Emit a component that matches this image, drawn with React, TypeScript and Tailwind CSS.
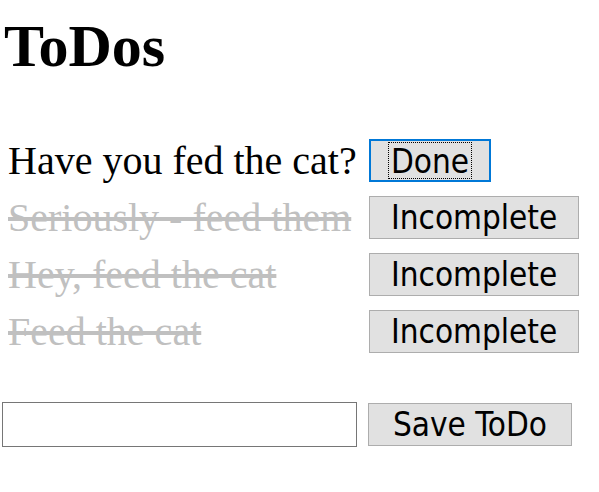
import { useState } from 'react';

type Todo = { id: number; text: string; done: boolean };

const initialTodos: Todo[] = [
  { id: 1, text: 'Have you fed the cat?', done: false },
  { id: 2, text: 'Seriously - feed them', done: true },
  { id: 3, text: 'Hey, feed the cat', done: true },
  { id: 4, text: 'Feed the cat', done: true },
];

const btn =
  'h-[43px] bg-[#e1e1e1] border border-[#adadad] text-black text-[33px] leading-none font-["DejaVu_Sans_Condensed","DejaVu_Sans",sans-serif] whitespace-nowrap';

function App() {
  const [todos] = useState(initialTodos);

  return (
    <div className="px-[2px] pt-[16px] text-black font-['Liberation_Serif','Times_New_Roman',serif]">
      <h1 className="ml-[2px] text-[60px] font-bold leading-none">ToDos</h1>

      <div className="mt-[63px] flex flex-col gap-[14px]">
        {todos.map((todo, i) => (
          <div key={todo.id} className="flex items-center">
            <span
              className={
                todo.done
                  ? 'w-[367px] pl-[6px] text-[40px] leading-none text-[#c0c0c0] line-through'
                  : 'w-[367px] pl-[6px] text-[40px] leading-none'
              }
            >
              {todo.text}
            </span>
            {i === 0 ? (
              <button className="h-[43px] px-[17px] bg-[#e1e1e1] border-2 border-[#0078d7] text-black text-[33px] leading-none font-['DejaVu_Sans_Condensed','DejaVu_Sans',sans-serif]">
                <span className="block h-[37px] px-[2px] leading-[37px] border border-dotted border-black">
                  Done
                </span>
              </button>
            ) : (
              <button className={btn + ' px-[21px]'}>Incomplete</button>
            )}
          </div>
        ))}
      </div>

      <form className="mt-[49px] flex items-center gap-[11px]" onSubmit={(e) => e.preventDefault()}>
        <input type="text" className="w-[355px] h-[45px] border border-[#767676] bg-white px-1 text-[32px]" />
        <button type="submit" className={btn + ' px-[24px]'}>
          Save ToDo
        </button>
      </form>
    </div>
  );
}

export default App;
